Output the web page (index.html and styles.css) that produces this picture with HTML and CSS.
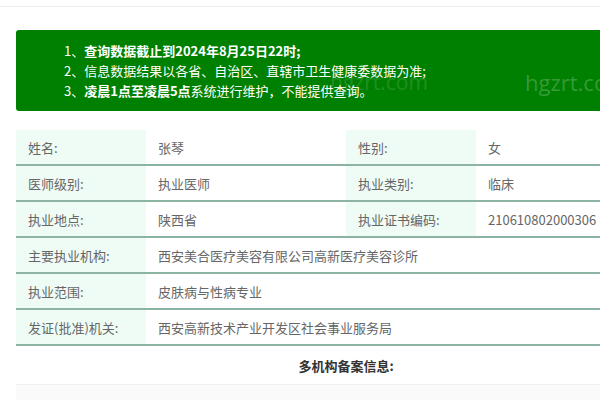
FILE: index.html
```html
<!DOCTYPE html>
<html lang="zh">
<head>
<meta charset="utf-8">
<link rel="stylesheet" href="styles.css">
</head>
<body>
<div class="topbar"></div>
<div class="page">
  <div class="notice">
    <p>1、<b>查询数据截止到2024年8月25日22时;</b></p>
    <p>2、信息数据结果以各省、自治区、直辖市卫生健康委数据为准;</p>
    <p>3、<b>凌晨1点至凌晨5点</b>系统进行维护，不能提供查询。</p>
    <span class="wm wm1">hgzrt.com</span>
    <span class="wm wm2">hgzrt.com</span>
  </div>
  <table class="info">
    <colgroup><col class="c1"><col class="c2"><col class="c3"><col class="c4"></colgroup>
    <tr><td class="lab">姓名:</td><td>张琴</td><td class="lab">性别:</td><td>女</td></tr>
    <tr><td class="lab">医师级别:</td><td>执业医师</td><td class="lab">执业类别:</td><td>临床</td></tr>
    <tr><td class="lab">执业地点:</td><td>陕西省</td><td class="lab">执业证书编码:</td><td>210610802000306</td></tr>
    <tr><td class="lab">主要执业机构:</td><td colspan="3">西安美合医疗美容有限公司高新医疗美容诊所</td></tr>
    <tr><td class="lab">执业范围:</td><td colspan="3">皮肤病与性病专业</td></tr>
    <tr><td class="lab">发证(批准)机关:</td><td colspan="3">西安高新技术产业开发区社会事业服务局</td></tr>
    <tr class="head"><td colspan="4">多机构备案信息:</td></tr>
    <tr class="next"><td colspan="4"></td></tr>
  </table>
</div>
</body>
</html>
```
FILE: styles.css
```css
html, body {
  margin: 0;
  padding: 0;
  background: #fff;
  overflow: hidden;
  font-family: "Noto Sans CJK SC", "Noto Sans", sans-serif;
}
.topbar {
  height: 6px;
  border-bottom: 1px solid #ececec;
}
.page {
  width: 660px;
  padding: 23px 0 0 16px;
}
.notice {
  position: relative;
  background: #008000;
  color: #fff;
  border-radius: 3px;
  padding: 11px 0 10px 48px;
  font-size: 13px;
  line-height: 20px;
  overflow: hidden;
}
.notice p {
  margin: 0;
}
.notice b {
  font-weight: bold;
}
.wm {
  position: absolute;
  font-family: "Open Sans", sans-serif;
  font-size: 22px;
  line-height: 24px;
  color: rgba(255, 255, 255, 0.22);
  white-space: nowrap;
}
.wm1 { left: 314px; top: 40px; font-size: 21px; color: rgba(255, 255, 255, 0.14); }
.wm2 { left: 509px; top: 40px; }
.info {
  margin-top: 19px;
  width: 660px;
  border-collapse: collapse;
  table-layout: fixed;
  font-size: 13px;
  color: #666;
}
.c1 { width: 130px; }
.c2 { width: 200px; }
.c3 { width: 130px; }
.c4 { width: 200px; }
.info td {
  height: 34px;
  padding: 0 12px;
  border-bottom: 2px solid #8db3a2;
  white-space: nowrap;
  vertical-align: middle;
}
.info td.lab {
  background: #effcf5;
}
.info tr.head td {
  height: 38px;
  border-bottom: none;
  text-align: center;
  font-weight: bold;
  color: #333;
}
.info tr.next td {
  height: 20px;
  border-bottom: none;
  background: #fafafa;
  border-top: 1px solid #f1f1f1;
}
```
